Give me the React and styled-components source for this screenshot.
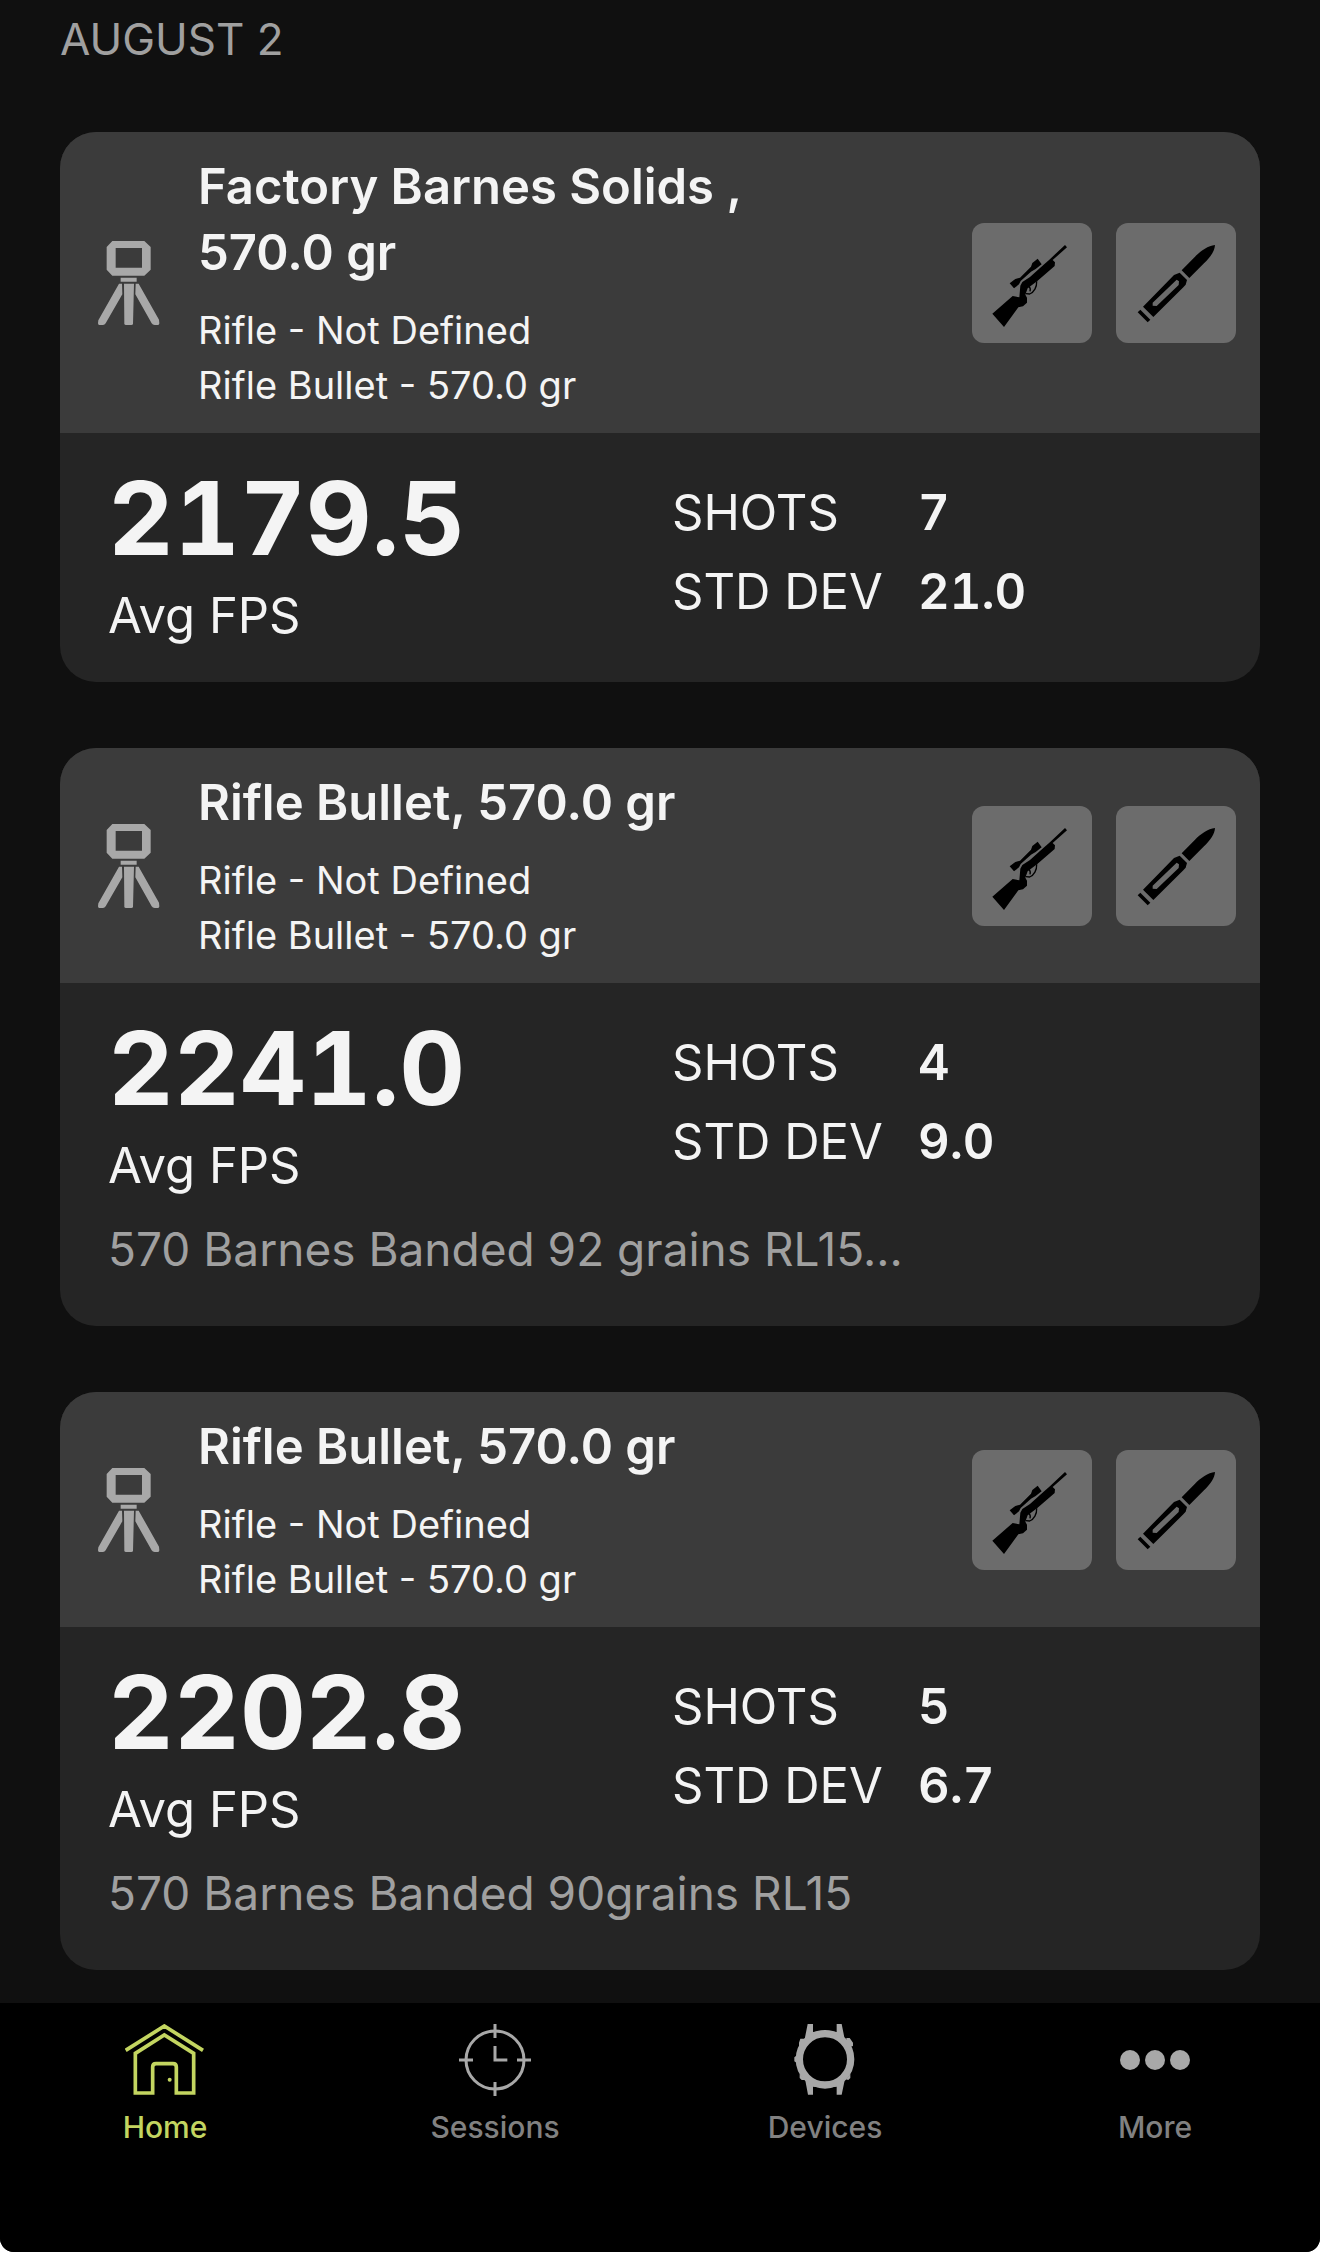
import React from 'react';
import styled, { createGlobalStyle, ThemeProvider } from 'styled-components';

const theme = {
  page: '#101010',
  cardHeader: '#3b3b3b',
  cardBody: '#252525',
  tile: '#6c6c6c',
  text: '#f4f4f4',
  muted: '#a0a0a0',
  icon: '#a8a8a8',
  tabLabel: '#818181',
  accent: '#c3d560',
};

const sessions = [
  {
    id: 1,
    title: 'Factory Barnes Solids , 570.0 gr',
    rifle: 'Rifle - Not Defined',
    bullet: 'Rifle Bullet - 570.0 gr',
    avg: '2179.5',
    shots: '7',
    stdDev: '21.0',
  },
  {
    id: 2,
    title: 'Rifle Bullet, 570.0 gr',
    rifle: 'Rifle - Not Defined',
    bullet: 'Rifle Bullet - 570.0 gr',
    avg: '2241.0',
    shots: '4',
    stdDev: '9.0',
    note: '570 Barnes Banded 92 grains RL15...',
  },
  {
    id: 3,
    title: 'Rifle Bullet, 570.0 gr',
    rifle: 'Rifle - Not Defined',
    bullet: 'Rifle Bullet - 570.0 gr',
    avg: '2202.8',
    shots: '5',
    stdDev: '6.7',
    note: '570 Barnes Banded 90grains RL15',
  },
];

const ChronographIcon = () => (
  <svg width="62" height="84" viewBox="0 0 186 252" fill="currentColor" aria-hidden="true">
    <path fillRule="evenodd" d="M43 0H139L158 18V86L139 104H43L26 86V18ZM53 21V80H132V21Z" />
    <path d="M68 110H116V122H68ZM78 128H108L105 249Q104 252 100 252H84Q80 252 79 249Z" />
    <path d="M63 128H72L73 160L23 247Q20 252 15 252H4Q0 252 0 247L1 238ZM113 128H122L183 236L184 247Q184 252 180 252H170Q164 252 161 247L112 160Z" />
  </svg>
);

const RifleIcon = () => (
  <svg width="120" height="120" viewBox="66 66 360 360" aria-hidden="true">
    <path d="M345 132L351 139L308 177L315 184L314 195L262 240L233 262L226 281L231 290V305L219 316L205 319L162 378L127 338L188 285L208 289L211 254L217 243L240 228L280 192L298 176Z" />
    <path d="M179 247L192 262L207 250L212 240L243 212L257 204L275 190L263 173L247 186L243 197L210 230L196 234Z" />
    <path d="M260 241C261 258 252 274 239 279L227 278M236 256Q243 261 240 271" fill="none" stroke="#000" strokeWidth="4" />
  </svg>
);

const BulletIcon = () => (
  <svg width="120" height="120" viewBox="498 66 360 360" aria-hidden="true">
    <path d="M795 132C774 134 752 150 735 167L695 208L718 231L762 187C782 167 794 151 795 132Z" />
    <path fillRule="evenodd" d="M689 215L711 237L707 251L700 259L610 348L579 317L664 230L672 222ZM680 236L608 305V314L620 315L686 252L687 241Z" />
    <path d="M571 326L601 356L593 364L563 334Z" />
  </svg>
);

const HomeIcon = () => (
  <svg width="80" height="72" viewBox="2 0 240 216" fill="none" stroke="currentColor" strokeWidth="11" aria-hidden="true">
    <path d="M4 79L120 6L236 79M33 88L120 33L208 88V207H156V129Q156 119 146 119H95Q85 119 85 129V207H33Z" />
    <circle cx="136" cy="167" r="6" fill="currentColor" stroke="none" />
  </svg>
);

const SessionsIcon = () => (
  <svg width="72" height="72" viewBox="0 0 216 216" fill="none" stroke="currentColor" strokeWidth="9" aria-hidden="true">
    <circle cx="108" cy="108" r="87" />
    <path d="M108 0V42M108 174V216M0 108H42M174 108H216M108 66V108H145" />
  </svg>
);

const DevicesIcon = () => (
  <svg width="72" height="72" viewBox="0 0 216 216" aria-hidden="true">
    <circle cx="108" cy="106" r="77" fill="none" stroke="currentColor" strokeWidth="22" />
    <path
      fill="currentColor"
      d="M56 0H72V24L90 22L46 50ZM143 0H158L168 50L126 22L143 24ZM48 164L88 190L72 188V212H57ZM168 164L158 212H143V188L126 190ZM34 44H46L44 72H30V56ZM172 42H182L192 56V66L174 72ZM16 100L24 94V118L16 112ZM32 150L50 168L38 168L32 162ZM170 166L184 150V162L178 168Z"
    />
  </svg>
);

const MoreIcon = () => (
  <svg width="72" height="72" viewBox="0 0 216 216" fill="currentColor" aria-hidden="true">
    <circle cx="33" cy="108" r="30" />
    <circle cx="108" cy="108" r="30" />
    <circle cx="183" cy="108" r="30" />
  </svg>
);

const tabs = [
  { name: 'Home', icon: <HomeIcon />, active: true },
  { name: 'Sessions', icon: <SessionsIcon /> },
  { name: 'Devices', icon: <DevicesIcon /> },
  { name: 'More', icon: <MoreIcon /> },
];

const SessionCard = ({ session }) => (
  <Card>
    <CardHeader>
      <DeviceMark><ChronographIcon /></DeviceMark>
      <Summary>
        <Title>{session.title}</Title>
        <Detail>{session.rifle}</Detail>
        <Detail>{session.bullet}</Detail>
      </Summary>
      <Actions>
        <TileButton type="button" aria-label="Rifle"><RifleIcon /></TileButton>
        <TileButton type="button" aria-label="Bullet"><BulletIcon /></TileButton>
      </Actions>
    </CardHeader>
    <CardBody>
      <Results>
        <div>
          <Average>{session.avg}</Average>
          <Unit>Avg FPS</Unit>
        </div>
        <Stats>
          <dt>SHOTS</dt>
          <dd>{session.shots}</dd>
          <dt>STD DEV</dt>
          <dd>{session.stdDev}</dd>
        </Stats>
      </Results>
      {session.note && <Note>{session.note}</Note>}
    </CardBody>
  </Card>
);

const App = () => (
  <ThemeProvider theme={theme}>
    <GlobalStyle />
    <Screen>
      <Feed>
        <DateHeading>AUGUST 2</DateHeading>
        <CardList>
          {sessions.map(session => <SessionCard key={session.id} session={session} />)}
        </CardList>
      </Feed>
      <TabBar>
        {tabs.map(tab => (
          <Tab key={tab.name} href={`#${tab.name.toLowerCase()}`} $active={tab.active}>
            {tab.icon}
            <TabLabel>{tab.name}</TabLabel>
          </Tab>
        ))}
      </TabBar>
    </Screen>
  </ThemeProvider>
);

const GlobalStyle = createGlobalStyle`
  * {
    box-sizing: border-box;
  }
  body {
    margin: 0;
    background: #fff;
    font-family: Inter, "Liberation Sans", sans-serif;
  }
  h1, h2, p, dl, dt, dd {
    margin: 0;
  }
  svg {
    display: block;
  }
`

const Screen = styled.div`
  display: flex;
  flex-direction: column;
  min-height: 100vh;
  overflow: hidden;
  border-radius: 0 0 14px 14px;
  background: ${props => props.theme.page};
  color: ${props => props.theme.text};
`

const Feed = styled.main`
  flex: 1;
  padding: 9px 60px 33px;
`

const DateHeading = styled.h1`
  margin-bottom: 63px;
  color: ${props => props.theme.muted};
  font-size: 44px;
  font-weight: 400;
  line-height: 60px;
`

const CardList = styled.div`
  display: flex;
  flex-direction: column;
  gap: 66px;
`

const Card = styled.article`
  overflow: hidden;
  border-radius: 36px;
  background: ${props => props.theme.cardBody};
`

const CardHeader = styled.header`
  display: flex;
  align-items: center;
  gap: 38px;
  padding: 0 24px 0 38px;
  background: ${props => props.theme.cardHeader};
`

const DeviceMark = styled.div`
  flex: none;
  color: ${props => props.theme.icon};
`

const Summary = styled.div`
  flex: 1;
  min-width: 0;
  padding: 22px 0 20px;
`

const Title = styled.h2`
  margin-bottom: 17px;
  font-size: 49px;
  font-weight: 600;
  line-height: 66px;
`

const Detail = styled.p`
  font-size: 38px;
  line-height: 55px;
`

const Actions = styled.div`
  display: flex;
  flex: none;
  gap: 24px;
  margin-left: 80px;
`

const TileButton = styled.button`
  width: 120px;
  height: 120px;
  padding: 0;
  border: 0;
  border-radius: 12px;
  background: ${props => props.theme.tile};
`

const CardBody = styled.div`
  padding: 25px 50px 33px 48px;
`

const Results = styled.div`
  display: grid;
  grid-template-columns: 1fr 1fr;
  gap: 26px;
`

const Average = styled.p`
  margin-bottom: 5px;
  font-size: 102px;
  font-weight: 700;
  font-variant-numeric: tabular-nums;
  line-height: 120px;
`

const Unit = styled.p`
  font-size: 49px;
  line-height: 66px;
`

const Stats = styled.dl`
  display: grid;
  grid-template-columns: 246px 1fr;
  align-content: start;
  row-gap: 13px;
  padding-top: 22px;
  font-size: 49px;
  line-height: 66px;

  dd {
    font-weight: 600;
    font-variant-numeric: tabular-nums;
  }
`

const Note = styled.p`
  margin: 20px 0 14px;
  overflow: hidden;
  color: ${props => props.theme.muted};
  font-size: 46px;
  line-height: 60px;
  text-overflow: ellipsis;
  white-space: nowrap;
`

const TabBar = styled.nav`
  display: grid;
  grid-template-columns: repeat(4, 1fr);
  padding: 21px 0 105px;
  background: #000;
`

const Tab = styled.a`
  display: flex;
  flex-direction: column;
  align-items: center;
  gap: 11px;
  color: ${props => props.$active ? props.theme.accent : props.theme.icon};
  text-decoration: none;

  span {
    color: ${props => props.$active ? props.theme.accent : props.theme.tabLabel};
  }
`

const TabLabel = styled.span`
  font-size: 30px;
  font-weight: 500;
  line-height: 40px;
`

export default App
